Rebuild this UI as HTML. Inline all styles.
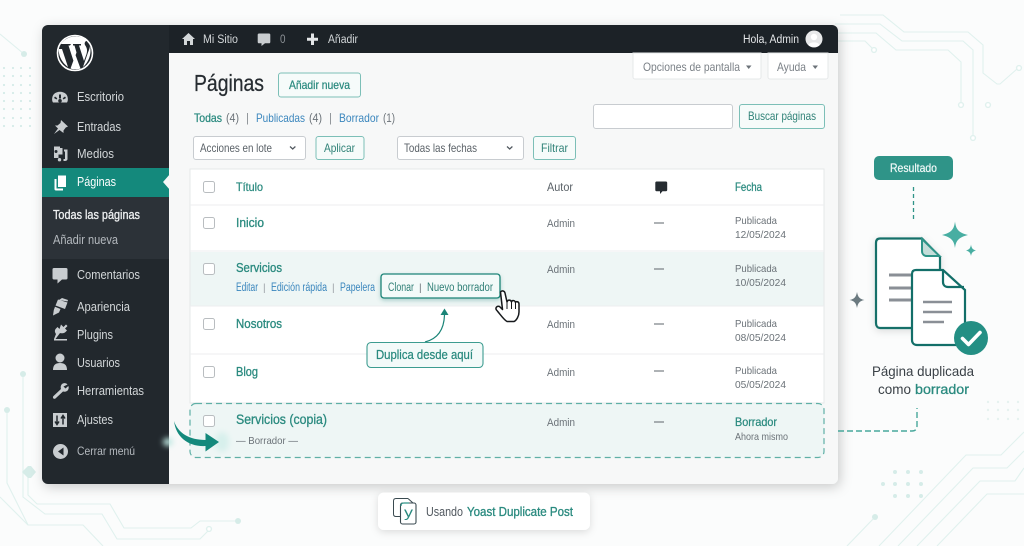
<!DOCTYPE html>
<html lang="es"><head><meta charset="utf-8"><title>Páginas</title>
<style>
html,body{margin:0;padding:0;background:#fbfcfc;width:1024px;height:546px;overflow:hidden}
svg{display:block;filter:blur(.35px)}
text{font-family:"Liberation Sans","DejaVu Sans",sans-serif;font-size:11.500px;fill:#50575e}
.m{fill:#d3d7d9;font-size:12.500px}
.t{fill:#2a8a7f;stroke:#2a8a7f;stroke-width:.3px;font-size:12.500px}
.md{stroke-width:.25px}
.b{fill:#3a86bd;font-size:11.500px}
.c{fill:none;stroke:#e0f1ee;stroke-width:1.100}
.cb{fill:#fff;stroke:#b9bdc0;stroke-width:1}
.btn{fill:#f6fbfa;stroke:#7cbfb7;stroke-width:1}
.sel{fill:#fff;stroke:#c8ccd0;stroke-width:1}
.g{fill:#6b7278}
.i{fill:#c9cdd0}
.bt{fill:#2f8277;font-size:12px}
</style></head><body>
<svg width="1024" height="546" viewBox="0 0 1024 546" xmlns="http://www.w3.org/2000/svg">
<defs>
<filter id="sh" x="-10%" y="-10%" width="120%" height="125%"><feDropShadow dx="2" dy="3" stdDeviation="6" flood-color="#000" flood-opacity=".2"/></filter>
<filter id="sm" x="-20%" y="-40%" width="140%" height="200%"><feDropShadow dx="0" dy="2" stdDeviation="4" flood-color="#000" flood-opacity=".13"/></filter>
<filter id="sd" x="-30%" y="-30%" width="160%" height="160%"><feDropShadow dx="0" dy="2" stdDeviation="2" flood-color="#0f6f66" flood-opacity=".28"/></filter>
<filter id="bl" x="-80%" y="-80%" width="260%" height="260%"><feGaussianBlur stdDeviation="3"/></filter>
<clipPath id="pc"><rect x="42" y="25" width="796" height="459" rx="6"/></clipPath>
</defs>
<rect width="1024" height="546" fill="#fbfcfc"/>

<!-- circuit decoration -->
<g class="c">
<path d="M840 15H883L904 32H968L983 45V73L997 84H1000L1017 69"/>
<path d="M835 24H880L902 41H963L973 50V135"/>
<path d="M835 33H876L896 50H948L961 62V102"/>
<path d="M835 41H865L872 48"/>
<circle cx="874" cy="50" r="2.400" fill="#fff" stroke-width="1.400"/><circle cx="961" cy="105" r="2.400" fill="#fff" stroke-width="1.400"/><circle cx="988" cy="105" r="2.400" fill="#fff" stroke-width="1.400"/><circle cx="973" cy="138" r="2.400" fill="#fff" stroke-width="1.400"/><circle cx="1019" cy="68" r="2.400" fill="#fff" stroke-width="1.400"/>
<path d="M1024 432L1001 455H966L879 546"/><path d="M1024 451L1007 468H973L898 546"/><path d="M1024 468L1015 481H980L917 546"/><path d="M1024 494H987L937 546"/><path d="M875 517L847 546"/>
<path d="M0 34L24 54"/>
<path d="M28 470V495L37 504H110L124 528H191L200 521H240"/>
<path d="M23 374V497L45 514H102L117 539H200L208 531"/>
<path d="M7 410V483L28 525H83L103 546"/><path d="M0 497L28 525"/>
<circle cx="209" cy="529" r="2.400" fill="#fff" stroke-width="1.400"/>
</g>
<g fill="#d6ecE8">
<circle cx="24" cy="54" r="3"/><circle cx="23" cy="374" r="3"/><circle cx="7" cy="410" r="3"/><circle cx="875" cy="517" r="3"/><circle cx="238" cy="521" r="3"/>
<path d="M22 472L28 466H31L36 472L31 478H28Z"/>
<circle cx="895" cy="472" r="2"/><circle cx="908" cy="472" r="2"/><circle cx="921" cy="472" r="2"/>
<circle cx="883" cy="484" r="2"/><circle cx="895" cy="484" r="2"/><circle cx="908" cy="484" r="2"/><circle cx="921" cy="484" r="2"/>
<circle cx="895" cy="496" r="2"/><circle cx="908" cy="496" r="2"/><circle cx="921" cy="496" r="2"/>
</g>
<g fill="#e6f2f0">
<circle cx="988" cy="402" r="1.200"/><circle cx="998" cy="402" r="1.200"/><circle cx="1008" cy="402" r="1.200"/><circle cx="1018" cy="402" r="1.200"/>
<circle cx="988" cy="410" r="1.200"/><circle cx="998" cy="410" r="1.200"/><circle cx="1008" cy="410" r="1.200"/><circle cx="1018" cy="410" r="1.200"/>
<circle cx="988" cy="419" r="1.200"/><circle cx="998" cy="419" r="1.200"/><circle cx="1008" cy="419" r="1.200"/><circle cx="1018" cy="419" r="1.200"/>
</g>
<g fill="#d5ebe8">
<circle cx="4" cy="68" r="1.100"/><circle cx="13" cy="68" r="1.100"/><circle cx="21" cy="68" r="1.100"/><circle cx="30" cy="68" r="1.100"/>
<circle cx="4" cy="76" r="1.100"/><circle cx="13" cy="76" r="1.100"/><circle cx="21" cy="76" r="1.100"/><circle cx="30" cy="76" r="1.100"/>
<circle cx="4" cy="85" r="1.100"/><circle cx="13" cy="85" r="1.100"/><circle cx="21" cy="85" r="1.100"/><circle cx="30" cy="85" r="1.100"/>
<circle cx="4" cy="93" r="1.100"/><circle cx="13" cy="93" r="1.100"/><circle cx="21" cy="93" r="1.100"/><circle cx="30" cy="93" r="1.100"/>
<circle cx="4" cy="101" r="1.100"/><circle cx="13" cy="101" r="1.100"/><circle cx="21" cy="101" r="1.100"/><circle cx="30" cy="101" r="1.100"/>
<circle cx="4" cy="109" r="1.100"/><circle cx="13" cy="109" r="1.100"/><circle cx="21" cy="109" r="1.100"/><circle cx="30" cy="109" r="1.100"/>
<circle cx="4" cy="118" r="1.100"/><circle cx="13" cy="118" r="1.100"/><circle cx="21" cy="118" r="1.100"/><circle cx="30" cy="118" r="1.100"/>
<circle cx="4" cy="126" r="1.100"/><circle cx="13" cy="126" r="1.100"/><circle cx="21" cy="126" r="1.100"/><circle cx="30" cy="126" r="1.100"/>
</g>

<!-- panel -->
<rect x="42" y="25" width="796" height="459" rx="6" fill="#f7f8f8" filter="url(#sh)"/>
<g clip-path="url(#pc)">
<rect x="42" y="25" width="127" height="459" fill="#22282d"/>
<rect x="169" y="25" width="669" height="28" fill="#1c2227"/>
<rect x="42" y="168" width="127" height="29" fill="#14897c"/>
<rect x="42" y="197" width="127" height="62" fill="#2c3238"/>
<path d="M170 174L163 182L170 190Z" fill="#f7f8f8"/>
</g>

<!-- WP logo -->
<circle cx="75" cy="53" r="17.500" fill="none" stroke="#fff" stroke-width="1.600"/>
<path d="M59 47C58 53 60 61 68 67L62 49H59ZM64 44H71L70 45.500H68.500L73.500 61L76.500 52.500L74.500 45.500H73V44H81V45.500H79L84 61L86.500 54C88 49 86 46.500 85 45C84 43 85.500 40.500 87.500 41C84 37.500 80 36.500 75 36.500C69 36.500 64 39.500 61 44ZM75.500 55L70.500 68.500C73.500 69.500 77.500 69.500 80.500 68.500ZM90 46C91.500 52 90 61 83 67L88 52.500C89 50 89.800 48 90 46Z" fill="#fff"/>

<!-- sidebar icons -->
<g class="i">
<path d="M53 102.500C51.500 100.500 52 96 54 94C57 91 63 91 66 94C68 96 68.500 100.500 67 102.500ZM59 94.500V98.500H61V94.500ZM55 96.500L54 98 56.500 99.500 57.300 98.200ZM65 96.500L62.700 98.200 63.500 99.500 66 98ZM60 99A1.800 1.800 0 1 0 60 102.600A1.800 1.800 0 1 0 60 99Z" fill-rule="evenodd"/>
<path d="M61 120L68 126.500 65.800 127.500 63.500 130.500 63.500 133 59.500 130 54 134 58 128.500 55 125.500 57.500 125.500 60.500 123 61 120Z"/>
<path d="M54 146.500H60V148H62.500V154.500H58.500V158H54ZM56 150A1.500 1.500 0 1 0 56 153A1.500 1.500 0 1 0 56 150ZM64 149.500H67.500V159C67.500 161 65 161 64.500 161H63.500V159H65V151.500H64ZM59.500 158A1.700 1.700 0 1 0 59.500 161.400A1.700 1.700 0 1 0 59.500 158Z" fill-rule="evenodd"/>
</g>
<g fill="#fff">
<path d="M58 175.500H66V187H58Z"/><path d="M54.500 179H56.500V188.500H63V190.500H56C55 190.500 54.500 190 54.500 189Z"/>
</g>
<g class="i">
<path d="M54 268H66C67 268 67.500 268.500 67.500 269.500V278C67.500 279 67 279.500 66 279.500H62L57.500 283.500V279.500H54C53 279.500 52.500 279 52.500 278V269.500C52.500 268.500 53 268 54 268Z"/>
<path d="M58 299.500L67.500 302.500 65 309 55.500 305.500ZM55 306.800L60.500 309 59 312.500 53 315.500 53.800 310ZM59 300L62 298 68 300 67.500 301.500Z"/>
<path d="M61 326.500L63.500 329 66 326.500 67.500 328 65 330.500 67 332.500 65.500 334C64 335.500 61.500 335.500 60 335L55.500 341H54L56 336C54.500 334 54.500 332 56 330.500L57.500 329 59.500 331ZM54 341H67V342.500H54Z" transform="translate(0 -2)"/>
<circle cx="60" cy="358" r="4.500"/><path d="M53 370C53 364.500 56 363 60 363C64 363 67 364.500 67 370Z"/>
<path d="M67.500 384.500C66.500 383 64 382.500 62 384C60.500 385.500 60.500 387.500 61 389L53.500 396C52.500 397 53 398.500 54 398.800C55 399 55.500 398.500 56 398L63 391.500C65 392 67 391.500 68 390C69 388.500 68.800 387 68.300 386L65.500 388.500 63.500 386.500Z"/>
<path d="M53 413H67V427H53Z"/>
</g>
<path d="M57 415.500V424M55 421.500L57 424.500 59 421.500M63 424.500V416M61 418.500L63 415.500 65 418.500" fill="none" stroke="#22282d" stroke-width="1.500"/>
<circle cx="60.500" cy="451.500" r="7.500" class="i"/><path d="M63.500 447.500V455.500L58 451.500Z" fill="#22282d"/>

<!-- sidebar text -->
<text class="m" x="77" y="101" textLength="47" lengthAdjust="spacingAndGlyphs">Escritorio</text>
<text class="m" x="77" y="131" textLength="44" lengthAdjust="spacingAndGlyphs">Entradas</text>
<text class="m" x="77" y="158" textLength="37" lengthAdjust="spacingAndGlyphs">Medios</text>
<text x="77" y="186" textLength="39" lengthAdjust="spacingAndGlyphs" style="fill:#fff;font-size:12.500px">Páginas</text>
<text x="53" y="219" textLength="87" lengthAdjust="spacingAndGlyphs" style="fill:#eef0f1;stroke:#eef0f1;stroke-width:.3px;font-size:12.500px">Todas las páginas</text>
<text x="53" y="244" textLength="65" lengthAdjust="spacingAndGlyphs" style="fill:#b4b9be;font-size:12.500px">Añadir nueva</text>
<text class="m" x="77" y="279" textLength="63" lengthAdjust="spacingAndGlyphs">Comentarios</text>
<text class="m" x="77" y="311" textLength="53" lengthAdjust="spacingAndGlyphs">Apariencia</text>
<text class="m" x="77" y="339" textLength="36" lengthAdjust="spacingAndGlyphs">Plugins</text>
<text class="m" x="77" y="367" textLength="43" lengthAdjust="spacingAndGlyphs">Usuarios</text>
<text class="m" x="77" y="395" textLength="67" lengthAdjust="spacingAndGlyphs">Herramientas</text>
<text class="m" x="77" y="424" textLength="36" lengthAdjust="spacingAndGlyphs">Ajustes</text>
<text x="77" y="455" textLength="58" lengthAdjust="spacingAndGlyphs" style="fill:#b4b9be;font-size:12px">Cerrar menú</text>

<!-- admin bar -->
<path d="M188.500 33L195 39H193V45H190V41H187V45H184V39H182Z" fill="#d3d7d9"/>
<text x="203" y="43" textLength="35" lengthAdjust="spacingAndGlyphs" style="fill:#d3d7d9;font-size:11.500px">Mi Sitio</text>
<path d="M259 33.500H269C269.800 33.500 270.300 34 270.300 34.800V42C270.300 42.800 269.800 43.300 269 43.300H265L261.500 46V43.300H259C258.200 43.300 257.700 42.800 257.700 42V34.800C257.700 34 258.200 33.500 259 33.500Z" fill="#c9cdd0"/>
<text x="280" y="43" textLength="5.500" lengthAdjust="spacingAndGlyphs" style="fill:#8c9196;font-size:11.500px">0</text>
<path d="M311 33.500H314V37.800H318V40.800H314V45H311V40.800H307V37.800H311Z" fill="#e4e6e8"/>
<text x="328" y="43" textLength="30" lengthAdjust="spacingAndGlyphs" style="fill:#d3d7d9;font-size:11.500px">Añadir</text>
<text x="743" y="43" textLength="56" lengthAdjust="spacingAndGlyphs" style="fill:#e4e6e8;font-size:11.500px">Hola, Admin</text>
<circle cx="814" cy="39" r="8.500" fill="#e8e9ea"/><circle cx="814" cy="37" r="3.200" fill="#fff"/><path d="M808.500 45C809.500 41.500 818.500 41.500 819.500 45C818 47.500 810 47.500 808.500 45Z" fill="#fff"/>

<!-- screen options -->
<path d="M633 53H761V77C761 78.100 760.100 79 759 79H635C633.900 79 633 78.100 633 77Z" fill="#fff" stroke="#e6e8e9"/>
<path d="M768 53H828V77C828 78.100 827.100 79 826 79H770C768.900 79 768 78.100 768 77Z" fill="#fff" stroke="#e6e8e9"/>
<text x="643" y="71" textLength="97" lengthAdjust="spacingAndGlyphs" style="fill:#7b8187;font-size:12px">Opciones de pantalla</text>
<path d="M746 65.500H751.500L748.700 69Z" fill="#6b7278"/>
<text x="777" y="71" textLength="29" lengthAdjust="spacingAndGlyphs" style="fill:#7b8187;font-size:12px">Ayuda</text>
<path d="M812.500 65.500H818L815.200 69Z" fill="#6b7278"/>

<!-- heading -->
<text x="194" y="91" textLength="70" lengthAdjust="spacingAndGlyphs" style="fill:#262c31;stroke:#262c31;stroke-width:.25px;font-size:23px">Páginas</text>
<rect x="278.500" y="73" width="82" height="24" rx="2.500" class="btn"/>
<text x="289" y="89" textLength="61" lengthAdjust="spacingAndGlyphs" class="t md" style="font-size:12px">Añadir nueva</text>
<text x="194" y="122" textLength="28" lengthAdjust="spacingAndGlyphs" class="t md" style="font-size:12px">Todas</text>
<text x="226" y="122" textLength="13" lengthAdjust="spacingAndGlyphs" style="fill:#6b7278">(4)</text>
<text x="246" y="122" style="fill:#8c9196">|</text>
<text x="256" y="122" textLength="49" lengthAdjust="spacingAndGlyphs" class="b" style="font-size:12px">Publicadas</text>
<text x="309" y="122" textLength="13" lengthAdjust="spacingAndGlyphs" style="fill:#6b7278">(4)</text>
<text x="329" y="122" style="fill:#8c9196">|</text>
<text x="339" y="122" textLength="40" lengthAdjust="spacingAndGlyphs" class="b" style="font-size:12px">Borrador</text>
<text x="383" y="122" textLength="12" lengthAdjust="spacingAndGlyphs" style="fill:#6b7278">(1)</text>

<!-- search -->
<rect x="593.500" y="104.500" width="139" height="24" rx="2.500" class="sel"/>
<rect x="739.500" y="104.500" width="85" height="24" rx="2.500" class="btn"/>
<text x="748" y="120" textLength="68" lengthAdjust="spacingAndGlyphs" class="bt">Buscar páginas</text>

<!-- filters -->
<rect x="193.500" y="136.500" width="112" height="23" rx="2.500" class="sel"/>
<text x="200" y="152" textLength="72" lengthAdjust="spacingAndGlyphs" style="fill:#5b6268;font-size:12px">Acciones en lote</text>
<path d="M290 146.500L292.700 149 295.400 146.500" fill="none" stroke="#50575e" stroke-width="1.200"/>
<rect x="316" y="136.500" width="48" height="23" rx="2.500" class="btn"/>
<text x="324" y="152" textLength="31" lengthAdjust="spacingAndGlyphs" class="bt">Aplicar</text>
<rect x="397.500" y="136.500" width="126" height="23" rx="2.500" class="sel"/>
<text x="404" y="152" textLength="73" lengthAdjust="spacingAndGlyphs" style="fill:#5b6268;font-size:12px">Todas las fechas</text>
<path d="M507 146.500L509.700 149 512.400 146.500" fill="none" stroke="#50575e" stroke-width="1.200"/>
<rect x="533.500" y="136.500" width="42" height="23" rx="2.500" class="btn"/>
<text x="541" y="152" textLength="27" lengthAdjust="spacingAndGlyphs" class="bt">Filtrar</text>

<!-- table -->
<rect x="190" y="169" width="634" height="234" fill="#fff" stroke="#e6e8e9"/>
<rect x="190.500" y="252" width="633" height="54" fill="#eef6f5"/>
<path d="M190 205H824M190 251H824M190 306H824M190 354H824" stroke="#eceeef" fill="none"/>

<!-- header row -->
<rect x="203.500" y="181.500" width="11" height="11" rx="2" class="cb"/>
<text x="236" y="191" textLength="27" lengthAdjust="spacingAndGlyphs" class="t md" style="font-size:12px">Título</text>
<text x="547" y="191" textLength="26" lengthAdjust="spacingAndGlyphs" style="fill:#5b6268;font-size:11.500px">Autor</text>
<path d="M656.500 181.500H666C666.700 181.500 667.200 182 667.200 182.700V190C667.200 190.700 666.700 191.200 666 191.200H662.500L660 194V191.200H656.500C655.800 191.200 655.300 190.700 655.300 190V182.700C655.300 182 655.800 181.500 656.500 181.500Z" fill="#262c31"/>
<text x="735" y="191" textLength="27" lengthAdjust="spacingAndGlyphs" class="t md" style="font-size:12px">Fecha</text>

<!-- Inicio -->
<rect x="203.500" y="217.500" width="11" height="11" rx="2" class="cb"/>
<text x="236" y="227" textLength="28" lengthAdjust="spacingAndGlyphs" class="t">Inicio</text>
<text x="547" y="227" textLength="28" lengthAdjust="spacingAndGlyphs" class="g" style="font-size:11px">Admin</text>
<path d="M654 223H664" stroke="#6b7278" stroke-width="1.100"/>
<text x="735" y="224" textLength="42" lengthAdjust="spacingAndGlyphs" class="g" style="font-size:10.500px">Publicada</text>
<text x="735" y="238" textLength="51" lengthAdjust="spacingAndGlyphs" class="g" style="font-size:10.500px">12/05/2024</text>

<!-- Servicios -->
<rect x="203.500" y="263.500" width="11" height="11" rx="2" class="cb"/>
<text x="236" y="272" textLength="46" lengthAdjust="spacingAndGlyphs" class="t">Servicios</text>
<text x="236" y="291" textLength="22" lengthAdjust="spacingAndGlyphs" class="b">Editar</text>
<text x="263" y="291" style="fill:#9aa0a5;font-size:10px">|</text>
<text x="271" y="291" textLength="56" lengthAdjust="spacingAndGlyphs" class="b">Edición rápida</text>
<text x="332" y="291" style="fill:#9aa0a5;font-size:10px">|</text>
<text x="340" y="291" textLength="35" lengthAdjust="spacingAndGlyphs" class="b">Papelera</text>
<text x="547" y="273" textLength="28" lengthAdjust="spacingAndGlyphs" class="g" style="font-size:11px">Admin</text>
<path d="M654 269H664" stroke="#6b7278" stroke-width="1.100"/>
<text x="735" y="272" textLength="42" lengthAdjust="spacingAndGlyphs" class="g" style="font-size:10.500px">Publicada</text>
<text x="735" y="286" textLength="51" lengthAdjust="spacingAndGlyphs" class="g" style="font-size:10.500px">10/05/2024</text>
<rect x="381" y="274" width="119" height="24" rx="3" fill="#f3faf9" stroke="#1a8477" stroke-width="1.300" filter="url(#sd)"/>
<text x="388" y="291" textLength="26" lengthAdjust="spacingAndGlyphs" style="fill:#2f7f76;font-size:11.500px">Clonar</text>
<text x="419" y="291" style="fill:#6b7278;font-size:10px">|</text>
<text x="427" y="291" textLength="66" lengthAdjust="spacingAndGlyphs" style="fill:#2f7f76;font-size:11.500px">Nuevo borrador</text>

<!-- cursor -->
<path d="M500.500 292C502 290 504.500 291 505 293L507 302C507.500 299.500 511 299.500 511.500 302C512 300 515 300 515.500 302.500C516 301 519 301.500 519 304V312C519 316 516.500 320.500 514 321.500H507C504 320 500 314 496.500 310C495 308 497 305.500 499.500 306.500L502.500 309.500Z" fill="#fff" stroke="#16191c" stroke-width="1.500" stroke-linejoin="round"/>
<path d="M507 302V309M511.500 302V309M515.500 303V309" stroke="#16191c" stroke-width="1" fill="none"/>

<!-- Duplica callout -->
<path d="M425 342C437 339 444 330 444.500 315" fill="none" stroke="#1a8477" stroke-width="1.200"/>
<path d="M440.500 315L444.500 308.500 448.500 315Z" fill="#1a8477"/>
<rect x="367" y="342.500" width="116" height="25" rx="4" fill="#f3faf9" stroke="#3d9c90" stroke-width="1.100"/>
<text x="376" y="359" textLength="97" lengthAdjust="spacingAndGlyphs" class="t md" style="font-size:13px">Duplica desde aquí</text>

<!-- Nosotros -->
<rect x="203.500" y="318.500" width="11" height="11" rx="2" class="cb"/>
<text x="236" y="328" textLength="46" lengthAdjust="spacingAndGlyphs" class="t">Nosotros</text>
<text x="547" y="328" textLength="28" lengthAdjust="spacingAndGlyphs" class="g" style="font-size:11px">Admin</text>
<path d="M654 324H664" stroke="#6b7278" stroke-width="1.100"/>
<text x="735" y="327" textLength="42" lengthAdjust="spacingAndGlyphs" class="g" style="font-size:10.500px">Publicada</text>
<text x="735" y="341" textLength="51" lengthAdjust="spacingAndGlyphs" class="g" style="font-size:10.500px">08/05/2024</text>

<!-- Blog -->
<rect x="203.500" y="366.500" width="11" height="11" rx="2" class="cb"/>
<text x="236" y="376" textLength="22" lengthAdjust="spacingAndGlyphs" class="t">Blog</text>
<text x="547" y="376" textLength="28" lengthAdjust="spacingAndGlyphs" class="g" style="font-size:11px">Admin</text>
<path d="M654 371H664" stroke="#6b7278" stroke-width="1.100"/>
<text x="735" y="374" textLength="42" lengthAdjust="spacingAndGlyphs" class="g" style="font-size:10.500px">Publicada</text>
<text x="735" y="388" textLength="51" lengthAdjust="spacingAndGlyphs" class="g" style="font-size:10.500px">05/05/2024</text>

<!-- copy row -->
<rect x="190" y="403.500" width="634" height="54" rx="6" fill="#eef6f5" stroke="#5fb0a6" stroke-width="1.200" stroke-dasharray="6 4"/>
<rect x="203.500" y="415.500" width="11" height="11" rx="2" class="cb"/>
<text x="236" y="424" textLength="91" lengthAdjust="spacingAndGlyphs" class="t" style="font-size:13.500px">Servicios (copia)</text>
<text x="236" y="444" textLength="62" lengthAdjust="spacingAndGlyphs" class="g" style="font-size:10.500px">— Borrador —</text>
<text x="547" y="426" textLength="28" lengthAdjust="spacingAndGlyphs" class="g" style="font-size:11px">Admin</text>
<path d="M654 422H664" stroke="#6b7278" stroke-width="1.100"/>
<text x="735" y="426" textLength="42" lengthAdjust="spacingAndGlyphs" class="t md" style="font-size:12px">Borrador</text>
<text x="735" y="440" textLength="53" lengthAdjust="spacingAndGlyphs" class="g" style="font-size:10.500px">Ahora mismo</text>

<!-- teal arrow -->
<ellipse cx="222" cy="442" rx="7" ry="10" fill="#d7f0ec" filter="url(#bl)"/>
<ellipse cx="168" cy="442" rx="5" ry="4" fill="#bfe8e2" filter="url(#bl)"/>
<path d="M174 421C178 433 189 440 206 440V446C188 447 176 437 174 421Z" fill="#14897c"/>
<path d="M205.500 433L219 442 205.500 451.500Z" fill="#14897c"/>

<!-- result side -->
<rect x="874" y="156" width="79" height="24" rx="5" fill="#2f9488"/>
<text x="890" y="172" textLength="47" lengthAdjust="spacingAndGlyphs" style="fill:#f2faf9;stroke:#f2faf9;stroke-width:.2px;font-size:12px">Resultado</text>
<path d="M913.500 187V219" stroke="#2f9488" stroke-width="1.300" stroke-dasharray="4 3" fill="none"/>
<path d="M838 431H912C915.500 431 917 429 917 426V408" stroke="#48a89c" stroke-width="1.400" stroke-dasharray="6 3" fill="none"/>

<path d="M955 221.500C956 229 958 232.500 968 235C958 237.500 956 241 955 248C954 241 952 237.500 942 235C952 232.500 954 229 955 221.500Z" fill="#48aea2"/>
<path d="M971 244.500C971.500 248 972.500 249.500 976 250.500C972.500 251.500 971.500 253 971 256C970.500 253 969.500 251.500 966 250.500C969.500 249.500 970.500 248 971 244.500Z" fill="#48aea2"/>
<path d="M857 292C858 297 859.500 299 864.500 300C859.500 301 858 303 857 308C856 303 854.500 301 849.500 300C854.500 299 856 297 857 292Z" fill="#6b7a80"/>

<path d="M880 238.500H922L940 257V323C940 326 938 328 935 328H880C877.500 328 876 326 876 323V243C876 240 877.500 238.500 880 238.500Z" fill="#fff" stroke="#136f69" stroke-width="2.200" filter="url(#sm)"/>
<path d="M922 239V251C922 254 924 256 927 256H939.500Z" fill="#c4ddd9" stroke="#2f9488" stroke-width="2"/>
<path d="M889 275H911M889 288H911M889 300H911" stroke="#8a8f96" stroke-width="3"/>
<path d="M916 270H943L965 290V340C965 343 963 345 960 345H917C914 345 912 343 912 340V274C912 271 913.500 270 916 270Z" fill="#fff" stroke="#136f69" stroke-width="2.200"/>
<path d="M943 270V282C943 285 945 287 948 287H964" fill="none" stroke="#136f69" stroke-width="2.200"/>
<path d="M923 302H952M923 312H952M923 322H944" stroke="#8a8f96" stroke-width="2.600"/>
<circle cx="971" cy="338" r="17" fill="#248f84"/>
<path d="M962.500 338.500L968.500 344.500 980 332.500" fill="none" stroke="#fff" stroke-width="3.600" stroke-linecap="round" stroke-linejoin="round"/>

<text x="872" y="376" textLength="102" lengthAdjust="spacingAndGlyphs" style="fill:#3a4147;font-size:14px">Página duplicada</text>
<text x="878" y="394" textLength="33" lengthAdjust="spacingAndGlyphs" style="fill:#3a4147;font-size:14px">como</text>
<text x="915" y="394" textLength="54" lengthAdjust="spacingAndGlyphs" style="fill:#2a8a7f;stroke:#2a8a7f;stroke-width:.3px;font-size:14px">borrador</text>

<!-- Yoast pill -->
<rect x="378" y="492.500" width="212" height="37.500" rx="6" fill="#fff" filter="url(#sm)"/>
<path d="M408 498.500H396C394.500 498.500 393.500 499.500 393.500 501V514C393.500 515.500 394.500 516.500 396 516.500H400" fill="none" stroke="#3a4a50" stroke-width="1"/>
<path d="M408 498.500L413 503" fill="none" stroke="#3a4a50" stroke-width="1"/>
<rect x="400.500" y="503" width="15.500" height="21" rx="2" fill="#fff" stroke="#3a4a50" stroke-width="1.100"/>
<path d="M401 506C401 503.500 402 503 404 503H409" fill="none" stroke="#2f9488" stroke-width="1.200"/>
<text x="404" y="517" textLength="9" lengthAdjust="spacingAndGlyphs" style="fill:#2a8a7f;font-size:14px">y</text>
<text x="426" y="516" textLength="37" lengthAdjust="spacingAndGlyphs" style="fill:#50575e;font-size:12.500px">Usando</text>
<text x="467" y="516" textLength="106" lengthAdjust="spacingAndGlyphs" class="t" style="font-size:12.500px">Yoast Duplicate Post</text>
</svg>
</body></html>
